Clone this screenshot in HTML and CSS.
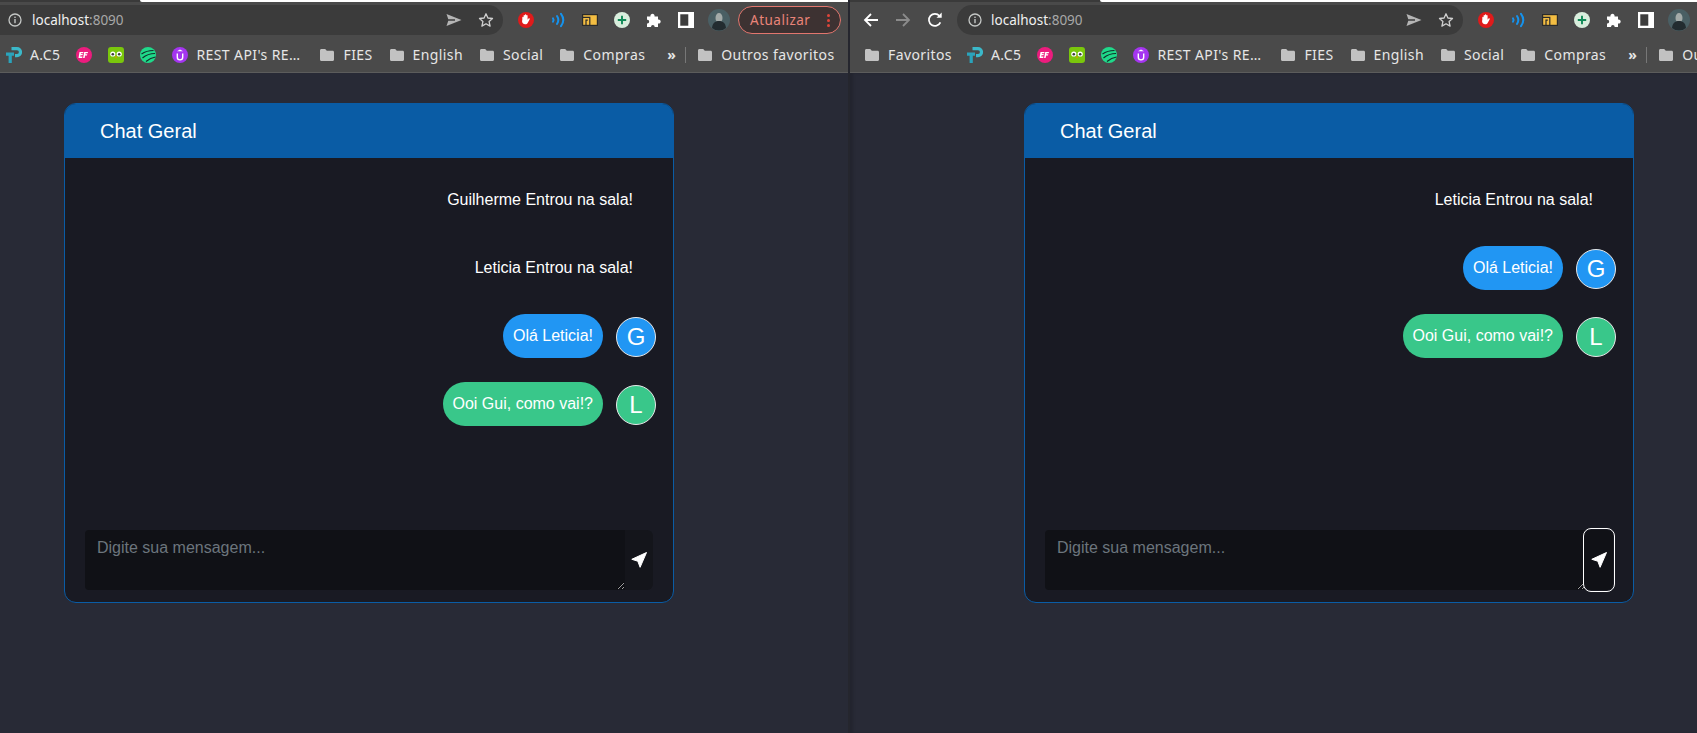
FILE: index.html

```html
<!DOCTYPE html>
<html lang="pt-BR">
<head>
  <meta charset="UTF-8" />
  <title>Chat Geral</title>
  <link rel="stylesheet" href="styles.css">
</head>
<body>
  <svg class="sprites" width="0" height="0">
    <symbol id="i-info" viewBox="0 0 16 16"><circle cx="8" cy="8" r="6" fill="none" stroke="#c4c7c5" stroke-width="1.3"/><rect x="7.3" y="7" width="1.4" height="4.2" fill="#c4c7c5"/><rect x="7.3" y="4.6" width="1.4" height="1.4" fill="#c4c7c5"/></symbol>
    <symbol id="i-share" viewBox="0 0 16 16"><path d="M0.500 2 15.500 8 0.500 14 2.300 8.800H9V7.200H2.300Z" fill="#b5b5b5"/></symbol>
    <symbol id="i-star" viewBox="0 0 16 16"><path d="M8 1.800 9.900 6l4.600.5-3.400 3.100 1 4.500L8 11.800l-4.100 2.300 1-4.500L1.500 6.500 6.100 6Z" fill="none" stroke="#d0d0d0" stroke-width="1.300" stroke-linejoin="round"/></symbol>
    <symbol id="i-stop" viewBox="0 0 16 16"><circle cx="8" cy="8" r="8" fill="#e01b1b"/><path d="M4.300 8.500V5.400c0-.9 1.300-.9 1.300 0V3.600c0-.9 1.300-.9 1.300 0V3c0-.9 1.400-.9 1.400 0v.7c0-.9 1.300-.9 1.300 0v4l.9-1.100c.7-.7 1.600 0 1.100.8l-1.800 3.300c-.6.900-1.300 1.600-2.500 1.600-2.200 0-3.300-1.300-3.300-3.800Z" fill="#fff"/></symbol>
    <symbol id="i-wave" viewBox="0 0 16 16"><g fill="none" stroke="#1593ee" stroke-width="2" stroke-linecap="round"><path d="M3 6.300c.7 1 .7 2.400 0 3.400"/><path d="M7 4c1.600 2.400 1.600 5.600 0 8"/><path d="M11 1.800c2.800 3.800 2.800 8.600 0 12.400"/></g></symbol>
    <symbol id="i-tab" viewBox="0 0 16 16"><rect x="0.600" y="2.600" width="14.800" height="10.800" fill="#f3bd42" stroke="#2b2b2b" stroke-width="1.200"/><path d="M.6 5.300h7.200V13.400" fill="none" stroke="#2b2b2b" stroke-width="1.200"/><path d="M4 13.400V8.200h1.800" fill="none" stroke="#2b2b2b" stroke-width="1.200"/></symbol>
    <symbol id="i-plus" viewBox="0 0 16 16"><circle cx="8" cy="8" r="8" fill="#d9eedd"/><path d="M8 3.800v8.400M3.800 8h8.400" stroke="#0f8a57" stroke-width="1.900"/></symbol>
    <symbol id="i-puzzle" viewBox="0 0 16 16"><path d="M1 4.500h3.400C4 .8 9 .8 8.600 4.500H12v3c3.600-.5 3.600 4.600 0 4V15H8.600c.4-2.800-3.900-2.800-3.500 0H1v-3.500c2.900.4 2.900-4.100 0-3.700Z" fill="#fff"/></symbol>
    <symbol id="i-panel" viewBox="0 0 14 14"><rect width="14" height="14" fill="#fff"/><rect x="2" y="2" width="7" height="10" fill="#3c3c3c"/></symbol>
    <symbol id="i-avatar" viewBox="0 0 22 22"><circle cx="11" cy="11" r="11" fill="#4a5f64"/><path d="M7.500 9c0-3 1.500-5 3.500-5s3.500 2 3.500 5-1.500 4-3.500 4-3.500-1-3.500-4Z" fill="#a3aaa8"/><path d="M4 19c.4-4.500 3-7 7-7s6.600 2.500 7 7A11 11 0 0 1 4 19Z" fill="#232c30"/></symbol>
    <symbol id="i-folder" viewBox="0 0 16 16"><path d="M1 3.500C1 2.700 1.600 2 2.400 2h3.800l1.600 1.800h5.800c.8 0 1.400.6 1.400 1.400v7.300c0 .8-.6 1.500-1.400 1.500H2.400c-.8 0-1.400-.7-1.400-1.500Z" fill="#c2c2c2"/></symbol>
    <symbol id="i-tp" viewBox="0 0 16 16"><path d="M5.500 0H11a5 5 0 0 1 0 10.200H9V7h2a1.800 1.800 0 0 0 0-3.800H5.500Z" fill="#3bb8c9"/><path d="M0 5.500h8v3.300H5.800V16H2.600V8.800H0Z" fill="#2aa3bb"/></symbol>
    <symbol id="i-ef" viewBox="0 0 16 16"><circle cx="8" cy="8" r="8" fill="#ec1c7e"/><path d="M3.500 5h4l-.3 1.200H5l-.2.900h2l-.3 1.200h-2l-.3 1.200h2.300L6.200 11H2.500ZM8.200 5h3.800l-.3 1.200H9.600l-.2 1h1.900l-.3 1.200H9.100L8.600 11H7.100Z" fill="#fff"/></symbol>
    <symbol id="i-duo" viewBox="0 0 16 16"><rect width="16" height="16" rx="3" fill="#7ac70c"/><circle cx="4.800" cy="7" r="2.600" fill="#fff"/><circle cx="11.200" cy="7" r="2.600" fill="#fff"/><circle cx="4.800" cy="7.300" r="1.300" fill="#3c3c3c"/><circle cx="11.200" cy="7.300" r="1.300" fill="#3c3c3c"/><path d="M6.800 9.500h2.400L8 11.500Z" fill="#f49000"/></symbol>
    <symbol id="i-leaf" viewBox="0 0 16 16"><circle cx="8" cy="8" r="8" fill="#1fd98a"/><g fill="none" stroke="#11302a" stroke-width="1.200"><path d="M1.500 7C5 4.500 9 3.500 13.500 3.500"/><path d="M2.500 11C6 8 10 6.500 15 6.500"/><path d="M6 14.500C9 12 12 10.500 15.500 10"/></g></symbol>
    <symbol id="i-udemy" viewBox="0 0 16 16"><circle cx="8" cy="8" r="8" fill="#a435f0"/><path d="M5.300 6.500v3.800c0 3.400 5.400 3.400 5.400 0V6.500" fill="none" stroke="#fff" stroke-width="1.400"/><path d="M8 2.500 11 4.300H5Z" fill="#fff"/></symbol>
    <symbol id="i-back" viewBox="0 0 16 16"><path d="M15 8H2.500M8 2 2 8l6 6" fill="none" stroke="currentColor" stroke-width="1.800"/></symbol>
    <symbol id="i-fwd" viewBox="0 0 16 16"><path d="M1 8h12.500M8 2l6 6-6 6" fill="none" stroke="currentColor" stroke-width="1.800"/></symbol>
    <symbol id="i-reload" viewBox="0 0 16 16"><path d="M13.400 10.300A6 6 0 1 1 12.500 4" fill="none" stroke="#fff" stroke-width="1.700"/><path d="M9.500 5.700h5.200V.5Z" fill="#fff"/></symbol>
    <symbol id="i-send" viewBox="0 0 16 16"><path d="M15.500.5.800 7.300l6 1.900 2.300 6.100Z" fill="#fff" stroke="#fff" stroke-width="1" stroke-linejoin="round"/></symbol>
  </svg>

  <div class="window window-left">
    <div class="strip"><span class="strip-light"></span></div>
    <div class="toolbar">
      <div class="omnibox">
        <svg class="ic"><use href="#i-info"/></svg>
        <span class="url">localhost<span class="port">:8090</span></span>
        <svg class="ic share"><use href="#i-share"/></svg>
        <svg class="ic star"><use href="#i-star"/></svg>
      </div>
      <div class="extensions">
        <svg class="ic"><use href="#i-stop"/></svg>
        <svg class="ic"><use href="#i-wave"/></svg>
        <svg class="ic"><use href="#i-tab"/></svg>
        <svg class="ic"><use href="#i-plus"/></svg>
        <svg class="ic"><use href="#i-puzzle"/></svg>
        <svg class="ic"><use href="#i-panel"/></svg>
        <svg class="ic avatar"><use href="#i-avatar"/></svg>
      </div>
      <div class="update">Atualizar<span class="dots"><i></i><i></i><i></i></span></div>
    </div>
    <div class="bookmarks">
      <span class="bm"><svg class="ic"><use href="#i-tp"/></svg>A.C5</span>
      <span class="bm"><svg class="ic"><use href="#i-ef"/></svg></span>
      <span class="bm"><svg class="ic"><use href="#i-duo"/></svg></span>
      <span class="bm"><svg class="ic"><use href="#i-leaf"/></svg></span>
      <span class="bm"><svg class="ic"><use href="#i-udemy"/></svg><span class="cut">REST API's RE…</span></span>
      <span class="bm"><svg class="ic"><use href="#i-folder"/></svg>FIES</span>
      <span class="bm"><svg class="ic"><use href="#i-folder"/></svg>English</span>
      <span class="bm"><svg class="ic"><use href="#i-folder"/></svg>Social</span>
      <span class="bm"><svg class="ic"><use href="#i-folder"/></svg>Compras</span>
      <span class="more">»</span>
      <span class="sep"></span>
      <span class="bm"><svg class="ic"><use href="#i-folder"/></svg>Outros favoritos</span>
    </div>
    <main class="page">
      <section class="chat">
        <header class="chat-head">Chat Geral</header>
        <div class="messages">
          <div class="row notice">Guilherme Entrou na sala!</div>
          <div class="row notice">Leticia Entrou na sala!</div>
          <div class="row"><span class="bubble blue">Olá Leticia!</span><span class="face blue">G</span></div>
          <div class="row"><span class="bubble green">Ooi Gui, como vai!?</span><span class="face green">L</span></div>
        </div>
        <form class="composer">
          <textarea placeholder="Digite sua mensagem..."></textarea>
          <button type="button" class="send"><svg class="send-ic"><use href="#i-send"/></svg></button>
        </form>
      </section>
    </main>
  </div>

  <div class="window window-right">
    <div class="strip"><span class="strip-light"></span></div>
    <div class="toolbar">
      <div class="nav">
        <svg class="ic back"><use href="#i-back"/></svg>
        <svg class="ic fwd"><use href="#i-fwd"/></svg>
        <svg class="ic"><use href="#i-reload"/></svg>
      </div>
      <div class="omnibox">
        <svg class="ic"><use href="#i-info"/></svg>
        <span class="url">localhost<span class="port">:8090</span></span>
        <svg class="ic share"><use href="#i-share"/></svg>
        <svg class="ic star"><use href="#i-star"/></svg>
      </div>
      <div class="extensions">
        <svg class="ic"><use href="#i-stop"/></svg>
        <svg class="ic"><use href="#i-wave"/></svg>
        <svg class="ic"><use href="#i-tab"/></svg>
        <svg class="ic"><use href="#i-plus"/></svg>
        <svg class="ic"><use href="#i-puzzle"/></svg>
        <svg class="ic"><use href="#i-panel"/></svg>
        <svg class="ic avatar"><use href="#i-avatar"/></svg>
      </div>
    </div>
    <div class="bookmarks">
      <span class="bm"><svg class="ic"><use href="#i-folder"/></svg>Favoritos</span>
      <span class="bm"><svg class="ic"><use href="#i-tp"/></svg>A.C5</span>
      <span class="bm"><svg class="ic"><use href="#i-ef"/></svg></span>
      <span class="bm"><svg class="ic"><use href="#i-duo"/></svg></span>
      <span class="bm"><svg class="ic"><use href="#i-leaf"/></svg></span>
      <span class="bm"><svg class="ic"><use href="#i-udemy"/></svg><span class="cut">REST API's RE…</span></span>
      <span class="bm"><svg class="ic"><use href="#i-folder"/></svg>FIES</span>
      <span class="bm"><svg class="ic"><use href="#i-folder"/></svg>English</span>
      <span class="bm"><svg class="ic"><use href="#i-folder"/></svg>Social</span>
      <span class="bm"><svg class="ic"><use href="#i-folder"/></svg>Compras</span>
      <span class="more">»</span>
      <span class="sep"></span>
      <span class="bm"><svg class="ic"><use href="#i-folder"/></svg>Outros favoritos</span>
    </div>
    <main class="page">
      <section class="chat">
        <header class="chat-head">Chat Geral</header>
        <div class="messages">
          <div class="row notice">Leticia Entrou na sala!</div>
          <div class="row"><span class="bubble blue">Olá Leticia!</span><span class="face blue">G</span></div>
          <div class="row"><span class="bubble green">Ooi Gui, como vai!?</span><span class="face green">L</span></div>
        </div>
        <form class="composer">
          <textarea placeholder="Digite sua mensagem..."></textarea>
          <button type="button" class="send focused"><svg class="send-ic"><use href="#i-send"/></svg></button>
        </form>
      </section>
    </main>
  </div>
</body>
</html>
```

FILE: styles.css

```css
html, body {
  height: 100%;
}

body {
  margin: 0;
  display: flex;
  height: 733px;
  overflow: hidden;
  background: #282a36;
  font-family: 'Liberation Sans', sans-serif;
  color: white;
}

.sprites {
  position: absolute;
}

.ic {
  width: 16px;
  height: 16px;
  flex: none;
}

.window {
  display: flex;
  flex-direction: column;
  height: 733px;
  overflow: hidden;
}

.window-left {
  width: 850px;
  flex: none;
  box-sizing: border-box;
  border-right: 2px solid #25262e;
}

.window-right {
  flex: 1;
  min-width: 0;
}

/* browser chrome */
.strip {
  height: 2px;
  background: #3a3a3a;
  flex: none;
}

.strip-light {
  display: block;
  height: 2px;
  background: white;
}

.window-left .strip-light {
  margin-left: 140px;
  border-radius: 0 0 0 4px;
}

.window-right .strip-light {
  margin-left: 250px;
  border-radius: 0 0 0 4px;
}

.toolbar {
  height: 38px;
  flex: none;
  display: flex;
  align-items: center;
  background: #4a4a4a;
  box-sizing: border-box;
}

.omnibox {
  height: 30px;
  flex: none;
  display: flex;
  align-items: center;
  background: #3b3b3b;
  border-radius: 0 15px 15px 0;
  margin-top: -2px;
  box-sizing: border-box;
  font-family: 'Noto Sans', sans-serif;
  font-size: 13.5px;
}

.window-left .omnibox {
  width: 503px;
  padding: 0 9px 0 7px;
}

.window-right .omnibox {
  width: 506px;
  padding: 0 9px 0 10px;
  border-radius: 15px;
}

.url {
  flex: 1;
  color: #f0f0f0;
}

.window-left .url {
  margin-left: 9px;
}

.window-right .url {
  margin-left: 8px;
}

.port {
  color: #a8a8a8;
}

.share {
  margin-right: 16px;
}

.extensions {
  display: flex;
  align-items: center;
  gap: 16px;
  margin-left: 15px;
  margin-top: -2px;
}

.avatar {
  width: 22px;
  height: 22px;
  margin-left: -2px;
}

.update {
  width: 103px;
  height: 28px;
  margin-left: 8px;
  margin-top: -2px;
  flex: none;
  box-sizing: border-box;
  display: flex;
  align-items: center;
  justify-content: space-between;
  padding: 0 10px 0 11px;
  border: 1px solid #e2766e;
  border-radius: 14px;
  background: #3d3232;
  color: #ea8479;
  font-family: 'Noto Sans', sans-serif;
  font-size: 13.5px;
  letter-spacing: 0.5px;
}

.dots {
  display: flex;
  flex-direction: column;
  gap: 2px;
}

.dots i {
  width: 3px;
  height: 3px;
  border-radius: 50%;
  background: #e0453a;
}

.nav {
  display: flex;
  align-items: center;
  gap: 16px;
  padding-left: 13px;
  margin-right: 14px;
  margin-top: -2px;
  color: white;
}

.fwd {
  color: #8b8b8b;
}

.bookmarks {
  height: 29px;
  padding-bottom: 3px;
  flex: none;
  display: flex;
  align-items: center;
  gap: 16px;
  background: #4a4a4a;
  border-bottom: 1px solid #5c5c5c;
  font-family: 'Noto Sans', sans-serif;
  font-size: 14px;
  letter-spacing: 0.4px;
  color: #e6e6e6;
  white-space: nowrap;
}

.window-left .bookmarks {
  padding-left: 6px;
}

.window-right .bookmarks {
  padding-left: 14px;
}

.window-right .bm:first-child {
  margin-right: -1px;
}

.bm {
  display: flex;
  align-items: center;
  gap: 8px;
  flex: none;
}

.cut {
  width: 107px;
  overflow: hidden;
}

.more {
  margin-left: 6px;
  font-weight: bold;
  font-size: 14px;
  width: 8px;
  flex: none;
}

.sep {
  width: 1px;
  height: 16px;
  background: #777;
  margin-left: -6px;
  margin-right: -5px;
  flex: none;
}

/* chat */
.page {
  flex: 1;
  padding-top: 30px;
}

.window-left .page {
  padding-left: 64px;
}

.window-right .page {
  padding-left: 174px;
  box-shadow: inset 3px 0 3px rgba(0,0,0,0.15);
}

.chat {
  width: 610px;
  height: 500px;
  box-sizing: border-box;
  display: flex;
  flex-direction: column;
  background: #191a23;
  border: 1px solid #0a5ca5;
  border-radius: 12px;
  overflow: hidden;
}

.chat-head {
  height: 54px;
  flex: none;
  display: flex;
  align-items: center;
  padding-left: 35px;
  background: #0a5ca5;
  font-size: 20px;
}

.messages {
  flex: 1;
  padding: 20px 17px 0 0;
  display: flex;
  flex-direction: column;
  gap: 24px;
}

.row {
  height: 44px;
  display: flex;
  align-items: center;
  justify-content: flex-end;
  gap: 13px;
}

.notice {
  padding-right: 23px;
  font-size: 16px;
}

.bubble {
  height: 44px;
  display: flex;
  align-items: center;
  padding: 0 10px;
  border-radius: 22px;
  font-size: 16px;
}

.face {
  width: 40px;
  height: 40px;
  margin-top: 2px;
  box-sizing: border-box;
  display: flex;
  align-items: center;
  justify-content: center;
  border: 1px solid #e8e8e8;
  border-radius: 50%;
  font-size: 24px;
}

.blue {
  background: #2196f3;
}

.green {
  background: #39c78a;
}

.composer {
  display: flex;
  align-items: center;
  padding: 0 20px 12px 20px;
}

textarea {
  flex: 1;
  height: 60px;
  box-sizing: border-box;
  padding: 9px 12px;
  border: none;
  border-radius: 4px 0 0 4px;
  outline: none;
  margin: 0;
  background: #101116;
  color: white;
  color-scheme: dark;
  font-family: 'Liberation Sans', sans-serif;
  font-size: 16px;
}

textarea::placeholder {
  color: #6c757d;
}

.send {
  width: 28px;
  height: 60px;
  flex: none;
  padding: 0;
  display: flex;
  align-items: center;
  justify-content: center;
  border: none;
  border-radius: 0 6px 6px 0;
  background: #14151b;
}

.send-ic {
  width: 16px;
  height: 16px;
}

.focused {
  background: #101116;
  border-radius: 6px;
  outline: 1px solid white;
  outline-offset: 1px;
}
```
